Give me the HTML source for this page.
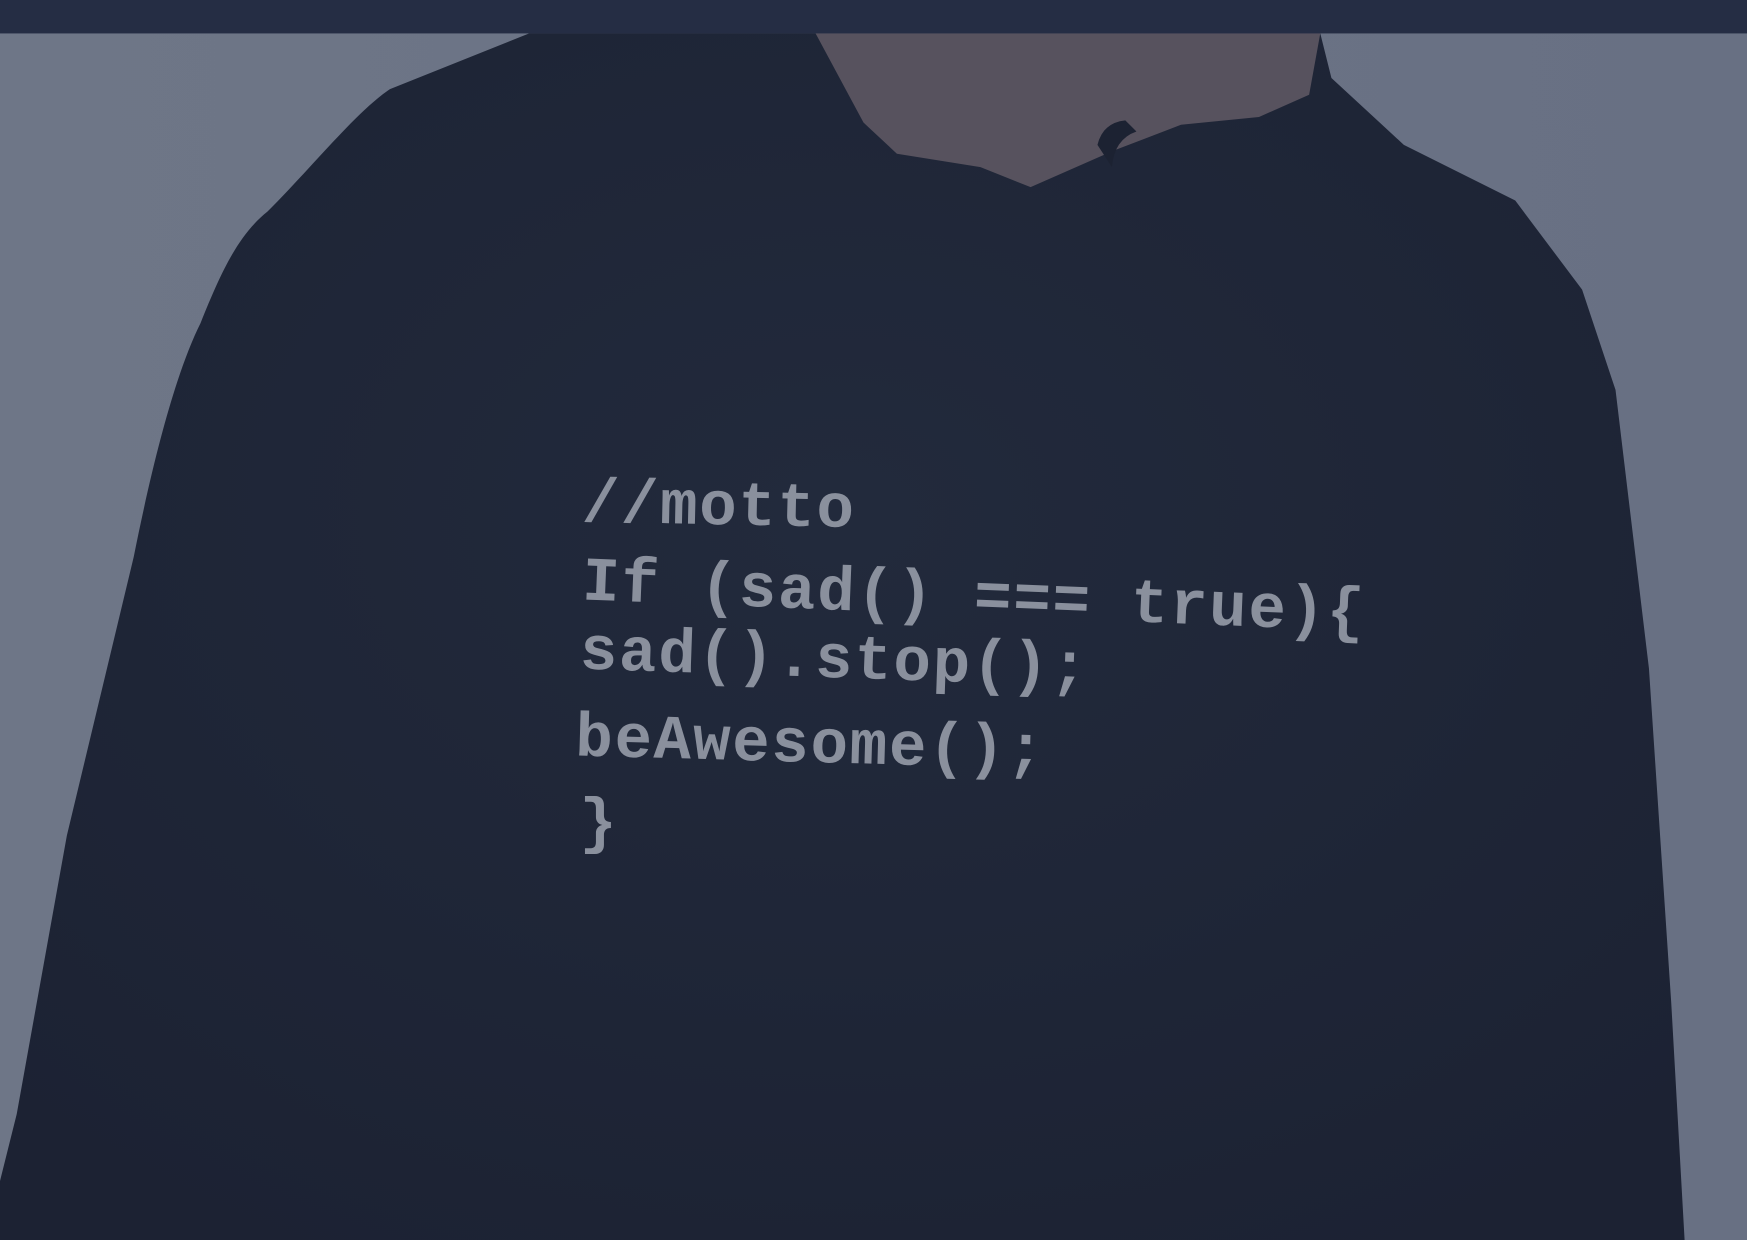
<!DOCTYPE html>
<html><head><meta charset="utf-8"><style>
html,body{margin:0;padding:0;background:#6a7283;overflow:hidden}
svg{display:block}
</style></head><body>
<svg width="1747" height="1240" viewBox="0 0 1568 1113" preserveAspectRatio="none" xmlns="http://www.w3.org/2000/svg">
<defs>
<linearGradient id="bg" x1="0" y1="0" x2="1" y2="0">
<stop offset="0" stop-color="#6e7687"/><stop offset="1" stop-color="#687083"/>
</linearGradient>
<radialGradient id="hd" cx="0.5" cy="0.4" r="0.7">
<stop offset="0" stop-color="#222a3c"/><stop offset="1" stop-color="#1c2233"/>
</radialGradient>
</defs>
<rect width="1568" height="1113" fill="url(#bg)"/>
<path d="M475,30 L1185,30 L1195,70 L1260,130 L1360,180 L1420,260 L1450,350 L1480,600 L1500,900 L1512,1113 L0,1113 L0,1060 L15,1000 L60,750 L120,500 C140,400 160,330 180,290 C200,240 215,210 240,190 C280,150 320,100 350,80 Z" fill="url(#hd)"/>
<path d="M732,30 L775,110 L805,138 L880,150 L925,168 L1000,135 L1060,112 L1130,105 L1175,85 L1185,30 Z" fill="#57525e"/>
<path d="M985,130 Q990,110 1010,108 L1020,118 Q1000,125 998,150 Z" fill="#1c2232"/>
<rect width="1568" height="30" fill="#252d44"/>
<g font-family="'Liberation Mono', monospace" font-weight="bold" font-size="56" fill="#8a909d">
<text x="522" y="468" transform="rotate(1.2 522 468)" letter-spacing="1.5">//motto</text>
<text x="522" y="538" transform="rotate(2.3 522 538)" letter-spacing="1.6">If (sad() === true){</text>
<text x="520" y="600" transform="rotate(2 520 600)" letter-spacing="1.6">sad().stop();</text>
<text x="516" y="678" transform="rotate(1.6 516 678)" letter-spacing="1.6">beAwesome();</text>
<text x="520" y="755">}</text>
</g>
</svg>
</body></html>
